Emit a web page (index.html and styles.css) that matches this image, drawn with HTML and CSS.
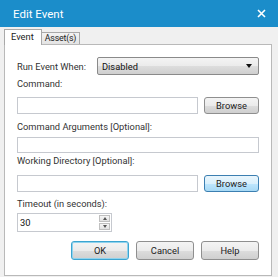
FILE: index.html
```html
<!DOCTYPE html>
<html lang="en">
<head>
  <meta charset="UTF-8" />
  <title>Edit Event</title>
  <link rel="stylesheet" href="styles.css">
</head>
<body>
  <div class="titlebar">
    <span class="title">Edit Event</span>
    <svg class="close" width="9" height="9" viewBox="0 0 9 9">
      <path d="M1 1L8 8M8 1L1 8" stroke="#fff" stroke-width="1.6" />
    </svg>
  </div>

  <div class="tabs">
    <div class="tab active">Event</div>
    <div class="tab">Asset(s)</div>
  </div>

  <div class="panel">
    <div class="row run">
      <span class="inline-label">Run Event When:</span>
      <div class="select">
        <span>Disabled</span>
        <span class="caret"></span>
      </div>
    </div>

    <div class="label l-command">Command:</div>
    <div class="row r-command">
      <div class="field grow"></div>
      <div class="btn browse">Browse</div>
    </div>

    <div class="label l-args">Command Arguments [Optional]:</div>
    <div class="field args"></div>

    <div class="label l-dir">Working Directory [Optional]:</div>
    <div class="row r-dir">
      <div class="field grow"></div>
      <div class="btn browse hot">Browse</div>
    </div>

    <div class="label l-timeout">Timeout (in seconds):</div>
    <div class="spinner">
      <span class="value">30</span>
      <div class="spin">
        <span class="up"></span>
        <span class="down"></span>
      </div>
    </div>

    <div class="actions">
      <div class="btn default">OK</div>
      <div class="btn">Cancel</div>
      <div class="btn">Help</div>
    </div>
  </div>
</body>
</html>
```

FILE: styles.css
```css
body {
  margin: 0;
  background: #f0f0f0;
  font-family: 'Roboto', sans-serif;
  font-size: 9.3px;
  color: #333;
  width: 278px;
  height: 277px;
  overflow: hidden;
}
.titlebar {
  height: 27px;
  background: #1b8dca;
  display: flex;
  align-items: center;
  justify-content: space-between;
  padding: 0 12px 0 13px;
  box-sizing: border-box;
}
.title {
  color: #fff;
  font-size: 11.5px;
}
.close {
  display: block;
}
.tabs {
  height: 17px;
  display: flex;
  align-items: flex-end;
  padding-left: 4px;
}
.tab {
  width: 37px;
  height: 11px;
  line-height: 11px;
  font-size: 8.8px;
  letter-spacing: -0.2px;
  text-align: center;
  border: 1px solid #a9a9a9;
  border-bottom: none;
  background: linear-gradient(#f3f3f3, #e3e3e3);
  margin-left: -1px;
  color: #222;
}
.tab.active {
  height: 15px;
  line-height: 14px;
  width: 30px;
  font-size: 9.3px;
  letter-spacing: 0;
  text-align: left;
  padding: 0 0 0 6px;
  margin-left: 0;
  background: #fff;
  position: relative;
  z-index: 1;
  margin-bottom: -1px;
}
.panel {
  width: 268px;
  height: 232px;
  box-sizing: border-box;
  margin-left: 4px;
  background: #fff;
  border: 1px solid #b9b9b9;
  padding: 12px 12px 0 12px;
}
.row {
  display: flex;
  align-items: center;
}
.inline-label {
  width: 80px;
}
.select {
  flex: 1;
  height: 18px;
  box-sizing: border-box;
  border: 1px solid #8a8a8a;
  border-radius: 2px;
  background: linear-gradient(#f4f4f4 0%, #ebebeb 50%, #dddddd 51%, #cfcfcf 100%);
  display: flex;
  align-items: center;
  justify-content: space-between;
  padding: 0 6px 0 4px;
  color: #111;
}
.caret {
  width: 0;
  height: 0;
  border-left: 3px solid transparent;
  border-right: 3px solid transparent;
  border-top: 4px solid #111;
}
.label {
  line-height: 14px;
}
.l-command { margin-top: 2px; }
.r-command { margin-top: 6px; }
.l-args { margin-top: 6px; }
.l-dir { margin-top: 1px; }
.r-dir { margin-top: 7px; }
.l-timeout { margin-top: 5px; }
.field {
  height: 17px;
  box-sizing: border-box;
  border: 1px solid #c6c9cf;
  background: #fff;
}
.grow {
  flex: 1;
  margin-right: 6px;
}
.args {
  margin-top: 3px;
  height: 16px;
}
.btn {
  height: 17px;
  box-sizing: border-box;
  border: 1px solid #8f8f8f;
  border-radius: 3px;
  background: linear-gradient(#f4f4f4 0%, #ebebeb 50%, #dddddd 51%, #cfcfcf 100%);
  display: flex;
  align-items: center;
  justify-content: center;
  color: #222;
}
.browse {
  width: 55px;
}
.browse.hot {
  border-color: #3c7fb1;
  background: linear-gradient(#eaf6fd 0%, #d9f0fc 50%, #bee6fd 51%, #a7d9f5 100%);
}
.spinner {
  margin-top: 2px;
  width: 95px;
  height: 19px;
  box-sizing: border-box;
  border: 1px solid #c6c9cf;
  display: flex;
  align-items: center;
  justify-content: space-between;
  padding: 0 1px 0 2px;
  color: #111;
}
.spin {
  width: 11px;
  height: 15px;
  display: flex;
  flex-direction: column;
  gap: 1px;
}
.spin span {
  flex: 1;
  border: 1px solid #c0c0c0;
  background: linear-gradient(#f6f6f6, #e2e2e2);
  display: flex;
  align-items: center;
  justify-content: center;
}
.spin span::after {
  content: "";
  width: 0;
  height: 0;
  border-left: 2px solid transparent;
  border-right: 2px solid transparent;
}
.spin .up::after { border-bottom: 3px solid #555; }
.spin .down::after { border-top: 3px solid #555; }
.actions {
  margin-top: 9px;
  display: flex;
  justify-content: flex-end;
  gap: 7px;
}
.actions .btn {
  width: 58px;
  height: 19px;
}
.actions .default {
  border: 1px solid #3ca4d0;
  box-shadow: inset 0 0 0 1px #8fd3ee;
}
```
